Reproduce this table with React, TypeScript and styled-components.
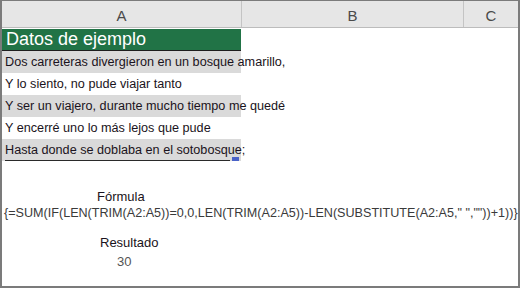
import React from "react";
import styled, { createGlobalStyle } from "styled-components";

const Global = createGlobalStyle`
  html, body { margin: 0; padding: 0; background: #fff; }
  body { font-family: "Liberation Sans", Arial, sans-serif; }
`;

const Frame = styled.div`
  box-sizing: border-box;
  width: 520px;
  height: 288px;
  border-style: solid;
  border-color: #7b7b7b;
  border-width: 1px 2px 2px 2px;
  background: #fff;
  display: flex;
  flex-direction: column;
  overflow: hidden;
`;

const HeaderRow = styled.div`
  display: grid;
  grid-template-columns: 240px 222px 1fr;
  height: 26px;
  background: #e6e6e6;
  border-bottom: 1px solid #bcbcbc;
`;

const HeaderCell = styled.div<{ $last?: boolean }>`
  display: flex;
  align-items: center;
  justify-content: center;
  font-size: 15px;
  color: #4a4a4a;
  border-right: ${(p) => (p.$last ? "none" : "1px solid #c4c4c4")};
  padding-top: 2px;
`;

const Sheet = styled.div`
  display: flex;
  flex-direction: column;
  padding-top: 1px;
`;

const TitleCell = styled.div`
  box-sizing: border-box;
  width: 239px;
  height: 22px;
  background: #217346;
  color: #fff;
  font-size: 18px;
  font-weight: 400;
  padding-left: 4px;
  line-height: 21px;
  border-bottom: 1px solid #1d1d1d;
  white-space: nowrap;
`;

const Row = styled.div<{ $shaded?: boolean }>`
  position: relative;
  box-sizing: border-box;
  width: 239px;
  height: 22px;
  background: ${(p) => (p.$shaded ? "#dadada" : "transparent")};
  font-size: 12.65px;
  color: #1a1320;
  padding-left: 3px;
  line-height: 22px;
  white-space: nowrap;
  overflow: visible;
`;

const Underline = styled.div`
  position: absolute;
  left: 3px;
  right: 11px;
  bottom: 0;
  height: 1px;
  background: #2a2a2a;
`;

const Handle = styled.div`
  position: absolute;
  right: 2px;
  bottom: 0;
  width: 7px;
  height: 4px;
  background: #4a62c8;
`;

const Summary = styled.div`
  display: flex;
  flex-direction: column;
  margin-top: 28px;
`;

const Caption = styled.div<{ $indent: number; $gap: number }>`
  margin-left: ${(p) => p.$indent}px;
  margin-top: ${(p) => p.$gap}px;
  font-size: 13px;
  color: #1a1320;
  line-height: 16px;
`;

const Formula = styled.div`
  margin-top: 0;
  padding-left: 2px;
  font-size: 12.6px;
  color: #3a3a3a;
  line-height: 16px;
  white-space: nowrap;
  letter-spacing: 0;
`;

const Value = styled.div`
  margin-left: 115px;
  margin-top: 3px;
  font-size: 13px;
  color: #555;
  line-height: 16px;
`;

const rows = [
  "Dos carreteras divergieron en un bosque amarillo,",
  "Y lo siento, no pude viajar tanto",
  "Y ser un viajero, durante mucho tiempo me quedé",
  "Y encerré uno lo más lejos que pude",
  "Hasta donde se doblaba en el sotobosque;",
];

export default function App() {
  return (
    <>
      <Global />
      <Frame>
        <HeaderRow>
          <HeaderCell>A</HeaderCell>
          <HeaderCell>B</HeaderCell>
          <HeaderCell $last>C</HeaderCell>
        </HeaderRow>
        <Sheet>
          <TitleCell>Datos de ejemplo</TitleCell>
          {rows.map((r, i) => (
            <Row key={i} $shaded={i % 2 === 0}>
              {r}
              {i === rows.length - 1 && (
                <>
                  <Underline />
                  <Handle />
                </>
              )}
            </Row>
          ))}
        </Sheet>
        <Summary>
          <Caption $indent={95} $gap={0}>Fórmula</Caption>
          <Formula>
            {'{=SUM(IF(LEN(TRIM(A2:A5))=0,0,LEN(TRIM(A2:A5))-LEN(SUBSTITUTE(A2:A5," ",""))+1))}'}
          </Formula>
          <Caption $indent={98} $gap={14}>Resultado</Caption>
          <Value>30</Value>
        </Summary>
      </Frame>
    </>
  );
}
